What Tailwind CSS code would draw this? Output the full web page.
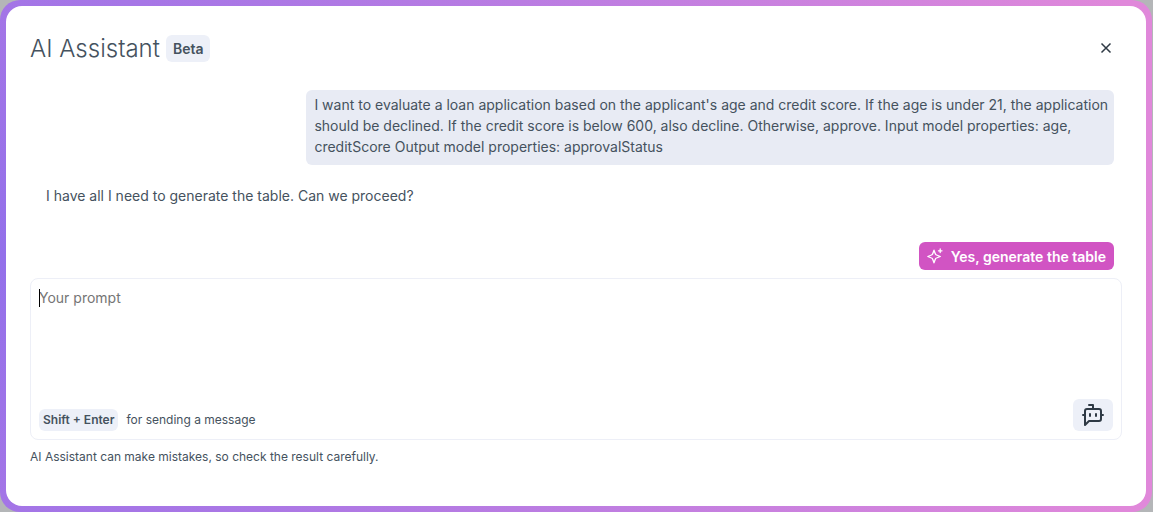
<!DOCTYPE html>
<html lang="en">
<head>
<meta charset="utf-8">
<meta name="viewport" content="width=device-width, initial-scale=1">
<title>AI Assistant</title>
<script src="https://cdn.jsdelivr.net/npm/@tailwindcss/browser@4"></script>
</head>
<body class="min-h-screen overflow-hidden bg-[#b4b6b8] pr-px font-[Inter,'Liberation_Sans',sans-serif] text-[#45525e]">
<main role="dialog" aria-labelledby="title" class="flex min-h-screen rounded-[20px] bg-radial-[circle_farthest-side_at_0%_50%] from-[#9370ea] to-[#e088da] p-1.5">
  <div class="flex grow flex-col rounded-2xl bg-white px-6 pt-[27px]">
    <header class="flex items-center pr-2">
      <h1 id="title" class="pt-0.5 text-2xl leading-7 font-light">AI Assistant</h1>
      <span class="ml-1.5 rounded-md bg-[#edf0f8] px-[7px] py-1 text-sm leading-[19px] font-semibold">Beta</span>
      <button type="button" aria-label="Close" class="ml-auto flex size-4 items-center justify-center text-[#2f3a45]">
        <svg class="size-4" viewBox="0 0 16 16" fill="none" stroke="currentColor" stroke-width="1.5"><path d="M3.5 3.5l9 9M12.5 3.500l-9 9"/></svg>
      </button>
    </header>

    <section aria-label="Conversation" class="mt-[27px] flex flex-col pr-2 text-sm leading-[21px]">
      <p class="w-[74.5%] self-end rounded-md bg-[#e8ebf4] pt-1 pr-1 pb-2 pl-2">I want to evaluate a loan application based on the applicant's age and credit score. If the age is under 21, the application should be declined. If the credit score is below 600, also decline. Otherwise, approve. Input model properties: age, creditScore Output model properties: approvalStatus</p>
      <p class="mt-5 px-4">I have all I need to generate the table. Can we proceed?</p>
      <button type="button" class="mt-9 flex h-7 items-center gap-2 self-end rounded-md bg-[#d154c3] px-2 font-semibold text-white">
        <svg class="size-4" viewBox="0 0 16 16" fill="none" stroke="currentColor" stroke-width="1.3" stroke-linecap="round" stroke-linejoin="round"><path d="M7 2.200l1.300 3.600a2 2 0 0 0 1.200 1.200L13.300 8.500 9.500 10a2 2 0 0 0-1.200 1.200L7 14.800l-1.300-3.600A2 2 0 0 0 4.500 10L.8 8.500 4.500 7a2 2 0 0 0 1.200-1.200zM13.200 1v3.600M11.400 2.800H15"/></svg>
        Yes, generate the table
      </button>
    </section>

    <form class="relative mt-2 flex flex-col rounded-lg border border-[#edeff7] p-2">
      <label for="prompt" class="sr-only">Your prompt</label>
      <textarea id="prompt" placeholder="Your prompt" class="-mx-1 h-28 resize-none px-1 text-sm leading-[21px] outline-none placeholder:text-[#757575]"></textarea>
      <span class="absolute top-2.5 left-2 h-[18px] w-px bg-black" aria-hidden="true"></span>
      <div class="flex items-end justify-between">
        <p class="flex items-center gap-2 text-xs leading-[22px]"><kbd class="rounded-md bg-[#edf0f8] px-1 font-[Inter,sans-serif] font-semibold">Shift + Enter</kbd>for sending a message</p>
        <button type="button" aria-label="Send message" class="flex h-8 w-10 items-center justify-center rounded-md bg-[#edf0f8] text-[#2f3a45]">
          <svg class="size-6" viewBox="0 0 24 24" fill="none" stroke="currentColor" stroke-width="2" stroke-linecap="round" stroke-linejoin="round"><path d="M12 6V2H8M8 18l-4 4V8a2 2 0 0 1 2-2h12a2 2 0 0 1 2 2v8a2 2 0 0 1-2 2ZM2 12h2M9 11v2M15 11v2M20 12h2"/></svg>
        </button>
      </div>
    </form>
    <p class="mt-2 text-xs leading-[18px]">AI Assistant can make mistakes, so check the result carefully.</p>
  </div>
</main>
</body>
</html>
